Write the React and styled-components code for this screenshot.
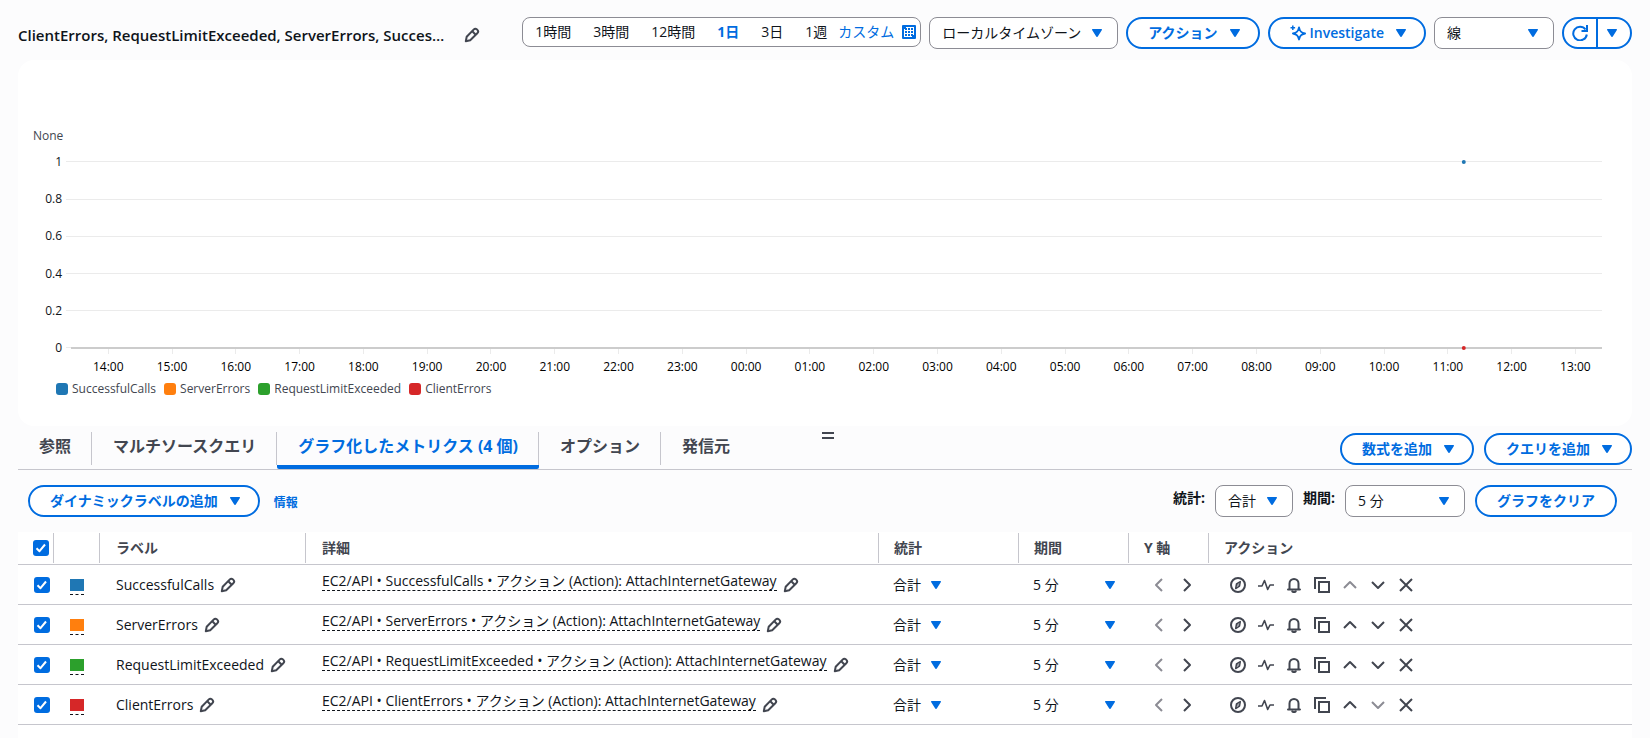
import React from 'react'
import styled, { createGlobalStyle } from 'styled-components'

const GlobalStyle = createGlobalStyle`
  * {
    box-sizing: border-box;
  }

  body {
    margin: 0;
    background: #fcfcfd;
    color: #0f141a;
    font-family: 'Open Sans', 'Noto Sans CJK JP', sans-serif;
    font-size: 14px;
    line-height: 20px;
  }

  button, select, input {
    margin: 0;
    font: inherit;
    color: inherit;
  }
`

const blue = '#006ce0'
const grey = '#424650'
const border = '#c6c6cd'

const Page = styled.main`
  display: flex;
  flex-direction: column;
  min-height: 100vh;
  padding: 0 18px;
`

const Toolbar = styled.header`
  display: flex;
  align-items: flex-start;
  gap: 8px;
  height: 60px;
  padding-top: 17px;
`

const TitleGroup = styled.div`
  display: flex;
  flex: 1;
  align-items: center;
  gap: 20px;
  min-width: 0;
  height: 36px;
`

const Title = styled.h1`
  margin: 0;
  font-size: 15px;
  font-weight: 600;
  white-space: nowrap;
`

const RangeBar = styled.div`
  display: flex;
  align-items: center;
  height: 30px;
  padding: 0 4px 0 1px;
  border: 1px solid #8c8c94;
  border-radius: 8px;
  background: #ffffff;
`

const RangeButton = styled.button`
  padding: 0 11px;
  border: 0;
  background: none;
  color: ${({ $active }) => $active ? blue : 'inherit'};
  font-weight: ${({ $active }) => $active ? 700 : 400};
  cursor: pointer;
`

const CustomButton = styled.button`
  display: flex;
  align-items: center;
  gap: 8px;
  padding: 0;
  border: 0;
  background: none;
  color: ${blue};
  cursor: pointer;
`

const Svg = styled.svg`
  display: block;
  flex: none;
  fill: none;
  stroke: currentColor;
  stroke-width: 2;
  stroke-linejoin: round;
`

const CaretSvg = styled.svg`
  display: block;
  flex: none;
  fill: ${blue};
`

const Button = styled.button`
  display: flex;
  align-items: center;
  gap: 12px;
  height: 32px;
  padding: 0 ${({ $menu }) => $menu ? 18 : 20}px 0 20px;
  border: 2px solid ${blue};
  border-radius: 20px;
  background: #ffffff;
  color: ${blue};
  font-weight: 600;
  white-space: nowrap;
  cursor: pointer;
`

const ButtonText = styled.span`
  display: flex;
  align-items: center;
  gap: 4px;
`

const SplitButton = styled.div`
  display: flex;
  height: 32px;
  border: 2px solid ${blue};
  border-radius: 20px;
  background: #ffffff;
  color: ${blue};
`

const SplitPart = styled.button`
  display: flex;
  align-items: center;
  justify-content: center;
  width: 32px;
  padding: 0;
  border: 0;
  background: none;
  cursor: pointer;

  & + & {
    width: 34px;
    padding-right: 4px;
    border-left: 2px solid ${blue};
  }
`

const SelectBox = styled.div`
  display: grid;
  align-items: center;
  width: ${({ $width }) => $width}px;

  & > * {
    grid-area: 1 / 1;
  }

  & > svg {
    justify-self: end;
    margin-right: ${({ $plain }) => $plain ? 0 : 16}px;
    pointer-events: none;
  }
`

const NativeSelect = styled.select`
  appearance: none;
  width: 100%;
  height: ${({ $plain }) => $plain ? 24 : 32}px;
  padding: ${({ $plain }) => $plain ? 0 : '0 12px'};
  border: ${({ $plain }) => $plain ? 0 : '1px solid #8c8c94'};
  border-radius: 8px;
  background: ${({ $plain }) => $plain ? 'none' : '#ffffff'};
`

const ChartPanel = styled.section`
  height: 366px;
  padding: 66px 30px 0 15px;
  border-radius: 16px;
  background: #ffffff;
`

const Unit = styled.div`
  height: 35px;
  color: ${grey};
  font-size: 12px;
`

const PlotRow = styled.div`
  display: flex;
`

const YAxis = styled.div`
  display: flex;
  flex-direction: column;
  justify-content: space-between;
  width: 29px;
  height: 206px;
  margin: -9px 9px 0 0;
  font-size: 12px;
  text-align: right;
`

const Plot = styled.svg`
  display: block;
  flex: 1;
  min-width: 0;
  height: 222px;
  overflow: visible;
  font-size: 12px;

  line {
    stroke: #ebebeb;
    shape-rendering: crispEdges;
  }

  text {
    text-anchor: middle;
  }
`

const Legend = styled.ul`
  display: flex;
  gap: 8px;
  margin: 0;
  padding: 0 0 0 23px;
  color: ${grey};
  font-size: 12px;
  line-height: 12px;
  list-style: none;
`

const LegendItem = styled.li`
  display: flex;
  gap: 4px;

  &::before {
    content: '';
    width: 12px;
    height: 12px;
    border-radius: 3px;
    background: ${({ $color }) => $color};
  }
`

const TabBar = styled.div`
  position: relative;
  display: flex;
  justify-content: space-between;
  height: 44px;
  border-bottom: 1px solid ${border};
`

const Tabs = styled.nav`
  display: flex;
`

const Tab = styled.button`
  display: flex;
  padding: 6px 0 0;
  border: 0;
  border-bottom: 4px solid ${({ $active }) => $active ? blue : 'transparent'};
  border-radius: 2px;
  background: none;
  color: ${({ $active }) => $active ? blue : grey};
  font-size: 16px;
  font-weight: 700;
  line-height: 28px;
  cursor: pointer;

  span {
    padding: 0 20px 0 21px;
    border-right: 1px solid ${border};
  }

  &:last-child span {
    border-right: 0;
  }
`

const TabActions = styled.div`
  display: flex;
  gap: 10px;
  padding-top: 7px;
`

/* grip between the chart and the tabs, floats over the tab bar */
const Grip = styled.button`
  position: absolute;
  top: 6px;
  left: 50%;
  width: 12px;
  height: 7px;
  margin-left: -3px;
  padding: 0;
  border: solid ${grey};
  border-width: 2px 0;
  background: none;
  cursor: row-resize;
`

const Controls = styled.div`
  display: flex;
  align-items: center;
  justify-content: space-between;
  height: 62px;
  padding: 0 15px 0 10px;
`

const ControlGroup = styled.div`
  display: flex;
  align-items: center;
  gap: ${({ $gap }) => $gap}px;
`

const InfoLink = styled.a`
  padding-top: 4px;
  color: ${blue};
  font-size: 12px;
  font-weight: 700;
  text-decoration: none;
`

const FieldLabel = styled.label`
  padding-bottom: 6px;
  font-weight: 700;
`

const TablePanel = styled.section`
  flex: 1;
  background: #ffffff;
`

const Table = styled.table`
  width: 100%;
  border-collapse: collapse;
  table-layout: fixed;
`

const HeadCell = styled.th`
  height: 32px;
  padding: 1px 0;
  border-bottom: 1px solid ${border};
  color: ${grey};
  font-weight: 700;
  text-align: left;
`

const HeadInner = styled.div`
  display: flex;
  align-items: center;
  height: 30px;
  padding-left: ${({ $pad }) => $pad}px;
  border-right: ${({ $last }) => $last ? 0 : `1px solid ${border}`};
`

const Cell = styled.td`
  height: 40px;
  padding: 0 0 0 ${({ $pad }) => $pad}px;
  border-bottom: 1px solid ${border};
  white-space: nowrap;
`

const Inline = styled.div`
  display: flex;
  align-items: center;
  gap: ${({ $gap }) => $gap || 6}px;
`

const Checkbox = styled.span`
  display: grid;
  width: 16px;
  height: 16px;

  & > * {
    grid-area: 1 / 1;
  }

  input {
    appearance: none;
    width: 16px;
    height: 16px;
    border-radius: 3px;
    background: ${blue};
  }

  svg {
    color: #ffffff;
    pointer-events: none;
  }
`

const Swatch = styled.button`
  display: block;
  width: 14px;
  height: 16px;
  margin-top: 4px;
  padding: 0 0 3px;
  border: 0;
  border-bottom: 1px dashed #0f141a;
  background: ${({ $color }) => $color} content-box;
`

const Detail = styled.span`
  margin-bottom: 6px;
  border-bottom: 1px dashed #0f141a;
  line-height: 18px;
`

const IconButton = styled.button`
  display: block;
  padding: 0;
  border: 0;
  background: none;
  color: ${grey};
  cursor: pointer;

  &:disabled {
    color: #8c8c94;
  }
`

const Caret = () => (
  <CaretSvg width='10' height='8' viewBox='0 0 10 8'>
    <path d='M.6 0h8.8c.5 0 .8.6.5 1L5.8 7.5a1 1 0 0 1-1.6 0L.1 1C-.2.6.1 0 .6 0z' />
  </CaretSvg>
)

const paths = {
  edit: <><path d='M1.8 14.2l.9-4.4L9.6 2.6c1-1 2.4-1 3.4-.1l.4.4c1 1 .9 2.4-.1 3.4l-7.1 7z' /><path d='M8.3 4.3l3.4 3.4' /></>,
  left: <path d='M11 2L5 8l6 6' />,
  right: <path d='M5 2l6 6-6 6' />,
  up: <path d='M2 11l6-6 6 6' />,
  down: <path d='M2 5l6 6 6-6' />,
  close: <path d='M2 2l12 12M14 2L2 14' />,
  compass: <><circle cx='8' cy='8' r='7' /><path strokeWidth='1.5' d='M10.3 4.6l-.8 4.5-3.8 2.4.8-4.5z' /><circle cx='8' cy='8' r='.4' strokeWidth='1' /></>,
  pulse: <path strokeWidth='1.6' d='M0 9h4l2.5-5.5 3.2 9L12 8h4' />,
  bell: <><path d='M3.5 11.5V6.500a4.5 4.5 0 0 1 9 0v5l1.5 1H2z' /><path d='M6 13.5c.4 2.2 3.6 2.2 4 0' /></>,
  copy: <><path strokeLinejoin='miter' d='M5 5h10v10H5z' /><path strokeLinejoin='miter' d='M1 12V1h11' /></>,
  check: <path d='M3.5 8.2l3 3L12 4.5' />,
  refresh: <><path d='M14.8 9.5A6.8 6.8 0 1 1 13.5 4.5' /><path strokeLinejoin='miter' d='M15 0v6H9.5' /></>,
  spark: <><path d='M9 2.600c.8 3.800 2.100 5.100 6 5.900-3.900.8-5.200 2.100-6 5.900-.8-3.800-2.100-5.100-6-5.900 3.900-.8 5.200-2.100 6-5.900z' /><path strokeWidth='1.5' d='M2.800.5v4.600M.5 2.800h4.600' /></>
}

const Icon = ({ name }) => (
  <Svg width='16' height='16' viewBox='0 0 16 16' aria-hidden='true'>{paths[name]}</Svg>
)

const CalendarIcon = () => (
  <Svg width='14' height='14' viewBox='0 0 14 14' aria-hidden='true'>
    <rect width='14' height='14' rx='1' fill='currentColor' stroke='none' />
    <path fill='#ffffff' stroke='none' d='M4 2h8v8h-2v2H2V4h2z' />
    <path strokeDasharray='2 1' d='M3 4h8M3 7h8M3 10h8' />
  </Svg>
)

const Select = ({ id, label, options, width, plain }) => (
  <SelectBox $width={width} $plain={plain}>
    <NativeSelect id={id} aria-label={label} $plain={plain}>
      {options.map(option => <option key={option}>{option}</option>)}
    </NativeSelect>
    <Caret />
  </SelectBox>
)

const Check = ({ label }) => (
  <Checkbox>
    <input type='checkbox' defaultChecked aria-label={label} />
    <Icon name='check' />
  </Checkbox>
)

const metrics = [
  { name: 'SuccessfulCalls', color: '#1f77b4' },
  { name: 'ServerErrors', color: '#ff7f0e' },
  { name: 'RequestLimitExceeded', color: '#2ca02c' },
  { name: 'ClientErrors', color: '#d62728' }
]

const ranges = ['1時間', '3時間', '12時間', '1日', '3日', '1週']
const tabs = ['参照', 'マルチソースクエリ', 'グラフ化したメトリクス (4 個)', 'オプション', '発信元']
const columns = [
  { label: '', width: 36, pad: 15 },
  { label: '', width: 46, pad: 0 },
  { label: 'ラベル', width: 206, pad: 16 },
  { label: '詳細', width: 573, pad: 16 },
  { label: '統計', width: 140, pad: 15 },
  { label: '期間', width: 110, pad: 15 },
  { label: 'Y 軸', width: 80, pad: 15 },
  { label: 'アクション', pad: 15 }
]

const gridY = [0, 38, 75, 112, 149, 186]

// the plot covers 24 hours and starts at 13:25
const position = minutes => `${(minutes / 1440) * 100}%`
const hours = Array.from({ length: 24 }, (_, i) => ({
  label: `${String((14 + i) % 24).padStart(2, '0')}:00`,
  x: position(35 + i * 60)
}))

const Chart = () => (
  <ChartPanel>
    <Unit>None</Unit>
    <PlotRow>
      <YAxis>
        {['1', '0.8', '0.6', '0.4', '0.2', '0'].map(value => <span key={value}>{value}</span>)}
      </YAxis>
      <Plot>
        {gridY.map(y => <line key={y} x1='-5' x2='100%' y1={y} y2={y} />)}
        {hours.map(({ label, x }) => (
          <g key={label}>
            <line x1={x} x2={x} y1='187' y2='193' />
            <text x={x} y='210'>{label}</text>
          </g>
        ))}
        <line x1='0' x2='100%' y1='187' y2='187' style={{ stroke: '#cccccc', strokeWidth: 2 }} />
        <circle cx={position(1310)} cy='1' r='2' fill='#1f77b4' />
        <circle cx={position(1310)} cy='187' r='2' fill='#d62728' />
      </Plot>
    </PlotRow>
    <Legend>
      {metrics.map(({ name, color }) => <LegendItem key={name} $color={color}>{name}</LegendItem>)}
    </Legend>
  </ChartPanel>
)

const MetricRow = ({ name, color, first, last }) => (
  <tr>
    <Cell $pad={16}><Check label={name} /></Cell>
    <Cell $pad={16}><Swatch $color={color} aria-label={`${name} color`} /></Cell>
    <Cell $pad={16}>
      <Inline>
        {name}
        <IconButton aria-label='Edit label'><Icon name='edit' /></IconButton>
      </Inline>
    </Cell>
    <Cell $pad={16}>
      <Inline>
        <Detail>EC2/API • {name} • アクション (Action): AttachInternetGateway</Detail>
        <IconButton aria-label='Edit details'><Icon name='edit' /></IconButton>
      </Inline>
    </Cell>
    <Cell $pad={14}><Select plain label='統計' options={['合計']} width={48} /></Cell>
    <Cell $pad={14}><Select plain label='期間' options={['5 分']} width={82} /></Cell>
    <Cell $pad={22}>
      <Inline $gap={12}>
        <IconButton disabled aria-label='Left'><Icon name='left' /></IconButton>
        <IconButton aria-label='Right'><Icon name='right' /></IconButton>
      </Inline>
    </Cell>
    <Cell $pad={21}>
      <Inline $gap={12}>
        {['compass', 'pulse', 'bell', 'copy', 'up', 'down', 'close'].map(icon => (
          <IconButton
            key={icon}
            aria-label={icon}
            disabled={(icon === 'up' && first) || (icon === 'down' && last)}
          >
            <Icon name={icon} />
          </IconButton>
        ))}
      </Inline>
    </Cell>
  </tr>
)

const App = () => (
  <>
    <GlobalStyle />
    <Page>
      <Toolbar>
        <TitleGroup>
          <Title>ClientErrors, RequestLimitExceeded, ServerErrors, Succes…</Title>
          <IconButton aria-label='Edit title'><Icon name='edit' /></IconButton>
        </TitleGroup>
        <RangeBar>
          {ranges.map(range => <RangeButton key={range} $active={range === '1日'}>{range}</RangeButton>)}
          <CustomButton>カスタム<CalendarIcon /></CustomButton>
        </RangeBar>
        <Select label='Timezone' options={['ローカルタイムゾーン']} width={189} />
        <Button $menu>アクション<Caret /></Button>
        <Button $menu><ButtonText><Icon name='spark' />Investigate</ButtonText><Caret /></Button>
        <Select label='Graph type' options={['線']} width={120} />
        <SplitButton>
          <SplitPart aria-label='Refresh'><Icon name='refresh' /></SplitPart>
          <SplitPart aria-label='Refresh options'><Caret /></SplitPart>
        </SplitButton>
      </Toolbar>
      <Chart />
      <TabBar>
        <Tabs>
          {tabs.map((tab, i) => <Tab key={tab} $active={i === 2}><span>{tab}</span></Tab>)}
        </Tabs>
        <Grip aria-label='Resize' />
        <TabActions>
          <Button $menu>数式を追加<Caret /></Button>
          <Button $menu>クエリを追加<Caret /></Button>
        </TabActions>
      </TabBar>
      <Controls>
        <ControlGroup $gap={14}>
          <Button $menu>ダイナミックラベルの追加<Caret /></Button>
          <InfoLink href='#info'>情報</InfoLink>
        </ControlGroup>
        <ControlGroup $gap={10}>
          <FieldLabel htmlFor='statistic'>統計:</FieldLabel>
          <Select id='statistic' options={['合計']} width={78} />
          <FieldLabel htmlFor='period'>期間:</FieldLabel>
          <Select id='period' options={['5 分']} width={120} />
          <Button>グラフをクリア</Button>
        </ControlGroup>
      </Controls>
      <TablePanel>
        <Table>
          <colgroup>
            {columns.map(({ width }, i) => <col key={i} width={width} />)}
          </colgroup>
          <thead>
            <tr>
              {columns.map(({ label, pad }, i) => (
                <HeadCell key={i}>
                  <HeadInner $pad={pad} $last={i === columns.length - 1}>
                    {i === 0 ? <Check label='Select all' /> : label}
                  </HeadInner>
                </HeadCell>
              ))}
            </tr>
          </thead>
          <tbody>
            {metrics.map((metric, i) => (
              <MetricRow key={metric.name} {...metric} first={i === 0} last={i === metrics.length - 1} />
            ))}
          </tbody>
        </Table>
      </TablePanel>
    </Page>
  </>
)

export default App
